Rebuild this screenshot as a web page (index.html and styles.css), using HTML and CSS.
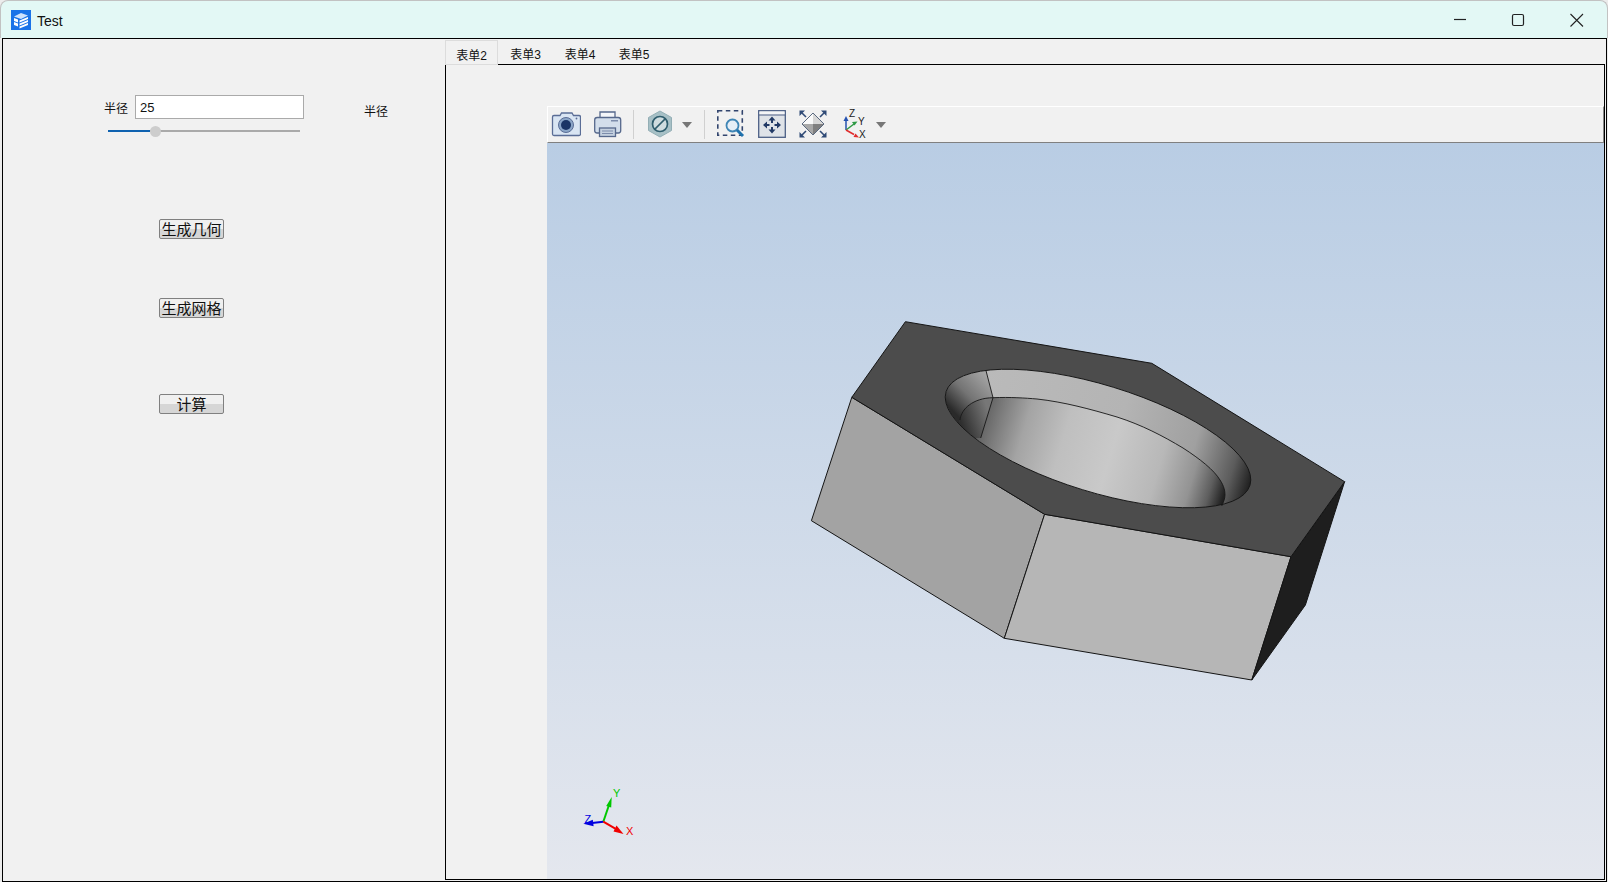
FILE: index.html
```html
<!DOCTYPE html>
<html lang="en">
<head>
    <meta charset="UTF-8">
    <meta name="viewport" content="width=device-width, initial-scale=1.0">
    <title>Test</title>
    <link rel="stylesheet" href="styles.css">
</head>
<body>
<div class="window">
    <!-- title bar -->
    <div class="titlebar">
        <svg class="app-icon" width="20" height="20" viewBox="0 0 20 20">
            <rect width="20" height="20" fill="#1a73e8"/>
            <path d="M3 6.500l7-3.500 7 2.500-7 3.500z" fill="#cfe2fb"/>
            <path d="M3 8l4 1.500v3L3 11zM3 12l4 1.500v3L3 15z" fill="#fff"/>
            <path d="M8.500 10.500l8.500-3.500v2l-8.500 3.500zM8.500 13.500l8.500-3.500v2l-8.500 3.500zM8.500 16.500l8.500-3.500v2l-8.500 3.500z" fill="#fff"/>
        </svg>
        <span class="app-title">Test</span>
        <div class="win-buttons">
            <svg width="58" height="38" viewBox="0 0 58 38"><path d="M22 18.500h12" stroke="#222" stroke-width="1.200"/></svg>
            <svg width="58" height="38" viewBox="0 0 58 38"><rect x="22.500" y="13.500" width="11" height="11" rx="1.500" fill="none" stroke="#222" stroke-width="1.200"/></svg>
            <svg width="58" height="38" viewBox="0 0 58 38"><path d="M22.500 13l12.500 12.500M35 13L22.500 25.500" stroke="#222" stroke-width="1.100"/></svg>
        </div>
    </div>

    <div class="content">
        <!-- left panel -->
        <div class="panel">
            <div class="radius-row">
                <div class="radius-input">
                    <label class="small-label">半径</label>
                    <input class="text-box" type="text" value="25">
                </div>
                <span class="small-label side-label">半径</span>
            </div>
            <div class="slider">
                <div class="slider-fill"></div>
                <div class="slider-thumb"></div>
            </div>
            <button class="action-btn btn-geo">生成几何</button>
            <button class="action-btn btn-mesh">生成网格</button>
            <button class="action-btn btn-calc">计算</button>
        </div>

        <!-- tabs + viewer -->
        <div class="main">
            <div class="tabs">
                <div class="tab active">表单2</div>
                <div class="tab">表单3</div>
                <div class="tab">表单4</div>
                <div class="tab">表单5</div>
            </div>
            <div class="tab-page">
                <div class="viewer">
                    <div class="toolbar">
                        <!-- camera -->
                        <svg width="30" height="35" viewBox="551 107 30 35">
                            <path d="M554 115.500h6l1.500-2.500h10.500l1.500 2.500h5.500a1.500 1.500 0 0 1 1.500 1.500v17a1.500 1.500 0 0 1-1.500 1.500h-25a1.500 1.500 0 0 1-1.500-1.500v-17a1.500 1.500 0 0 1 1.500-1.500z" fill="#d9e5f3" stroke="#5a6d96" stroke-width="1.300"/>
                            <circle cx="566" cy="125" r="7.500" fill="#8ba6c8" stroke="#5a6d96"/>
                            <circle cx="566" cy="125" r="5" fill="#1b3566"/>
                            <circle cx="576.500" cy="118.500" r="0.900" fill="#5a6d96"/>
                        </svg>
                        <!-- printer -->
                        <svg class="tool-print" width="28" height="35" viewBox="594 107 28 35">
                            <path d="M600 118v-6h15v6" fill="#f4f6f9" stroke="#56688c" stroke-width="1.300"/>
                            <rect x="594.700" y="117.500" width="26" height="15.500" rx="2.500" fill="#d3deeb" stroke="#56688c" stroke-width="1.300"/>
                            <rect x="611" y="120" width="7" height="1.500" fill="#7c8cab"/>
                            <rect x="599.500" y="128" width="16" height="8.500" fill="#c4d0df" stroke="#56688c" stroke-width="1.300"/>
                            <path d="M602 131h11M602 133.500h11" stroke="#7c8cab"/>
                        </svg>
                        <div class="tool-sep"></div>
                        <!-- clipping -->
                        <svg class="tool-clip" width="24" height="35" viewBox="648 107 24 35">
                            <path d="M660 111l11.500 6.500v13L660 137l-11.500-6.500v-13z" fill="#a7c0c6" stroke="#93aeb5"/>
                            <circle cx="660" cy="124" r="7.500" fill="#cfdcdf" stroke="#2f5d6d" stroke-width="1.700"/>
                            <path d="M654.500 129.500l11-11" stroke="#2f5d6d" stroke-width="1.700"/>
                        </svg>
                        <div class="drop-arrow arrow-clip"></div>
                        <div class="tool-sep sep-zoom"></div>
                        <!-- zoom window -->
                        <svg width="27" height="35" viewBox="717 107 27 35">
                            <rect x="717.800" y="110.800" width="24.500" height="24.500" fill="none" stroke="#32456e" stroke-width="1.600" stroke-dasharray="4.500 3.500"/>
                            <circle cx="732.500" cy="125.500" r="6" fill="#e6eef6" stroke="#3f85b5" stroke-width="1.800"/>
                            <path d="M737 130l6 6" stroke="#1f72ad" stroke-width="3"/>
                        </svg>
                        <!-- pan -->
                        <svg class="tool-pan" width="28" height="35" viewBox="758 107 28 35">
                            <rect x="758.700" y="110.700" width="26.600" height="26.600" fill="#dfe3e8" stroke="#4c5f85" stroke-width="1.300"/>
                            <rect x="759.500" y="111.500" width="25" height="3" fill="#f4f5f7"/>
                            <path d="M759 115h26" stroke="#4c5f85"/>
                            <path d="M772 116.500l-3.500 4h2.500v2.500h2v-2.500h2.500zM772 133.500l-3.500-4h2.500V127h2v2.500h2.500zM763 125l4-3.500v2.500h2.500v2H767v2.500zM781 125l-4-3.500v2.500h-2.500v2h2.500v2.500z" fill="#223a66"/>
                        </svg>
                        <!-- fit all -->
                        <svg class="tool-fit" width="28" height="35" viewBox="799 107 28 35">
                            <path d="M813 113l-11 11h11z" fill="#fafafa"/>
                            <path d="M813 113l11 11h-11z" fill="#d6d6d6"/>
                            <path d="M813 135l-11-11h11z" fill="#a8a8a8"/>
                            <path d="M813 135l11-11h-11z" fill="#7f7f7f"/>
                            <path d="M813 113l11 11-11 11-11-11z" fill="none" stroke="#5b6a80"/>
                            <path d="M799.500 110.500h5.500l-5.500 5.500zM826.500 110.500H821l5.500 5.500zM799.500 137.500h5.500l-5.500-5.500zM826.500 137.500H821l5.500-5.500z" fill="#2f4a76"/>
                            <path d="M802 113l4 4M824 113l-4 4M802 135l4-4M824 135l-4-4" stroke="#2f4a76" stroke-width="1.600"/>
                        </svg>
                        <!-- view axes -->
                        <svg class="tool-axes" width="30" height="35" viewBox="841 107 30 35">
                            <path d="M846 130v-10" stroke="#2452b0" stroke-width="1.500"/>
                            <path d="M846 116l-2.500 5h5z" fill="#2452b0"/>
                            <path d="M846 130l8-6" stroke="#2e9a45" stroke-width="1.500"/>
                            <path d="M857.500 121.500l-5.500 .5 2.500 3.500z" fill="#2e9a45"/>
                            <path d="M846 130l8 4.500" stroke="#e02c2c" stroke-width="1.500"/>
                            <path d="M859 137.500l-5.500-.5 2-3.500z" fill="#e02c2c"/>
                            <text class="axis-letter" x="849" y="117">Z</text>
                            <text class="axis-letter" x="858" y="125">Y</text>
                            <text class="axis-letter" x="859" y="137.500">X</text>
                        </svg>
                        <div class="drop-arrow arrow-axes"></div>
                    </div>
                    <div class="scene">
                        <svg class="nut" width="1057" height="736" viewBox="547 143 1057 736">
                            <defs>
                                <linearGradient id="wallRight" gradientUnits="userSpaceOnUse" x1="985" y1="372" x2="1261" y2="455">
                                    <stop offset="0" stop-color="#bababa"/>
                                    <stop offset="0.5" stop-color="#b4b4b4"/>
                                    <stop offset="0.77" stop-color="#a0a0a0"/>
                                    <stop offset="0.92" stop-color="#5c5c5c"/>
                                    <stop offset="1" stop-color="#1a1a1a"/>
                                </linearGradient>
                                <linearGradient id="wallLeft" gradientUnits="userSpaceOnUse" x1="987" y1="376" x2="952" y2="410">
                                    <stop offset="0" stop-color="#a4a4a4"/>
                                    <stop offset="0.55" stop-color="#747474"/>
                                    <stop offset="1" stop-color="#2a2a2a"/>
                                </linearGradient>
                                <linearGradient id="bore" gradientUnits="userSpaceOnUse" x1="985" y1="420" x2="1225" y2="492">
                                    <stop offset="0" stop-color="#666666"/>
                                    <stop offset="0.06" stop-color="#7e7e7e"/>
                                    <stop offset="0.16" stop-color="#a4a4a4"/>
                                    <stop offset="0.32" stop-color="#bfbfbf"/>
                                    <stop offset="0.52" stop-color="#c9c9c9"/>
                                    <stop offset="0.72" stop-color="#b8b8b8"/>
                                    <stop offset="0.86" stop-color="#939393"/>
                                    <stop offset="0.94" stop-color="#5e5e5e"/>
                                    <stop offset="1" stop-color="#202020"/>
                                </linearGradient>
                                <linearGradient id="boreLeft" gradientUnits="userSpaceOnUse" x1="988" y1="410" x2="960" y2="420">
                                    <stop offset="0" stop-color="#777777"/>
                                    <stop offset="1" stop-color="#2e2e2e"/>
                                </linearGradient>
                                <clipPath id="holeClip">
                                    <ellipse cx="1098" cy="438.500" rx="159" ry="53.500" transform="rotate(17.100 1098 438.500)"/>
                                </clipPath>
                            </defs>

                            <!-- nut faces -->
                            <g stroke="#141414" stroke-width="1" stroke-linejoin="round">
                                <polygon points="851.800,397.300 1044.600,514.300 1004.300,638.300 811.400,520.700" fill="#a3a3a3"/>
                                <polygon points="1044.600,514.300 1291,556.700 1251.800,680 1004.300,638.300" fill="#b6b6b6"/>
                                <polygon points="1344.600,481.700 1291,556.700 1251.800,680 1305.400,605" fill="#1e1e1e"/>
                                <polygon points="905.400,321.700 1151.800,363.300 1344.600,481.700 1291,556.700 1044.600,514.300 851.800,397.300" fill="#4c4c4c"/>
                            </g>

                            <!-- hole -->
                            <g clip-path="url(#holeClip)">
                                <rect x="930" y="360" width="340" height="160" fill="url(#wallRight)"/>
                                <path d="M986 370.700L993 397.700 980.700 438 930 440V360H986z" fill="url(#wallLeft)"/>
                                <path d="M960 420C961 409 973 398 993 397.700C1010 397 1025 398 1037 399C1064 402 1090 409 1117 417C1142 425 1163 436 1183 448C1200 459 1214 470 1220 480C1224 486 1225 491 1225 495C1225 499 1223 503 1221.700 506L1100 600 940 500z" fill="url(#bore)"/>
                                <path d="M960 420C961 409 973 398 993 397.700L980.700 438 950 440z" fill="url(#boreLeft)"/>
                            </g>
                            <g fill="none" stroke="#161616" stroke-width="0.900">
                                <ellipse cx="1098" cy="438.500" rx="159" ry="53.500" transform="rotate(17.100 1098 438.500)"/>
                                <path d="M960 420C961 409 973 398 993 397.700C1010 397 1025 398 1037 399C1064 402 1090 409 1117 417C1142 425 1163 436 1183 448C1200 459 1214 470 1220 480C1224 486 1225 491 1225 495C1225 499 1223 503 1221.700 506"/>
                                <path d="M986 370.700L993 397.700 980.700 438"/>
                            </g>

                            <!-- axis triad -->
                            <path d="M603.300 821.700L609 805" stroke="#00c800" stroke-width="2"/>
                            <path d="M611.700 797l-5.500 9 5 1.500z" fill="#00c800"/>
                            <path d="M603.300 821.700L592 823" stroke="#0000e0" stroke-width="2"/>
                            <path d="M583.300 823.700l9.500-4 .8 6.500z" fill="#0000e0"/>
                            <path d="M603.300 821.700l12 7" stroke="#f00000" stroke-width="2"/>
                            <path d="M623.500 834l-10-2.500 3-6z" fill="#f00000"/>
                            <text class="triad-letter" x="613" y="797" fill="#00c800">Y</text>
                            <text class="triad-letter" x="584.500" y="823" fill="#0000e0">Z</text>
                            <text class="triad-letter" x="626" y="835" fill="#f00000">X</text>
                        </svg>
                    </div>
                </div>
            </div>
        </div>
    </div>
</div>
</body>
</html>
```
FILE: styles.css
```css
* {
    box-sizing: border-box;
}
body {
    margin: 0;
    width: 1608px;
    height: 882px;
    overflow: hidden;
    background: #ececec;
    font-family: "Liberation Sans", "Noto Sans CJK SC", sans-serif;
}
.window {
    width: 1608px;
    height: 882px;
    display: flex;
    flex-direction: column;
}

/* title bar */
.titlebar {
    height: 38px;
    flex: none;
    display: flex;
    align-items: center;
    padding-left: 10px;
    background: #e3f8f5;
    border: 1px solid #c2c2c2;
    border-bottom: none;
    border-radius: 8px 8px 0 0;
}
.app-title {
    margin-left: 6px;
    padding-top: 2px;
    font-size: 14px;
    color: #111;
}
.win-buttons {
    margin-left: auto;
    display: flex;
    margin-right: 1px;
}

/* content */
.content {
    flex: 1;
    display: flex;
    margin: 0 1px 0 2px;
    border: 1px solid #000;
    min-height: 0;
}
.panel {
    width: 442px;
    flex: none;
    background: #f1f1f1;
}
.small-label {
    font-size: 12px;
    color: #111;
}
.radius-row {
    display: flex;
    align-items: flex-start;
    padding: 56px 0 0 101px;
}
.radius-input {
    display: flex;
    align-items: center;
    gap: 7px;
}
.text-box {
    width: 169px;
    height: 24px;
    padding: 0 4px;
    border: 1px solid #aaa;
    background: #fff;
    font: 13px "Liberation Sans", sans-serif;
    color: #111;
    outline: none;
}
.side-label {
    margin: 7px 0 0 60px;
}
.slider {
    position: relative;
    height: 2px;
    width: 192px;
    margin: 11px 0 0 105px;
    background: #aaa;
}
.slider-fill {
    width: 42px;
    height: 2px;
    background: #0f62b0;
}
.slider-thumb {
    position: absolute;
    left: 42px;
    top: -4px;
    width: 11px;
    height: 11px;
    border-radius: 50%;
    background: #cdcdcd;
}
.action-btn {
    display: block;
    width: 65px;
    height: 20px;
    padding: 0;
    margin-left: 156px;
    border: 1px solid #808080;
    border-radius: 2px;
    background: linear-gradient(#f0f0f0 50%, #d6d6d6 50%);
    font: 15px/18px "Noto Sans CJK SC", sans-serif;
    color: #111;
}
.btn-geo {
    margin-top: 87px;
}
.btn-mesh {
    margin-top: 59px;
}
.btn-calc {
    margin-top: 76px;
}

/* tabs */
.main {
    flex: 1;
    display: flex;
    flex-direction: column;
    min-width: 0;
    background: #f1f1f1;
}
.tabs {
    height: 25px;
    flex: none;
    display: flex;
    align-items: stretch;
}
.tab {
    width: 54px;
    padding-top: 6px;
    text-align: center;
    font-size: 12px;
    color: #111;
}
.tab.active {
    position: relative;
    z-index: 1;
    width: 53px;
    height: 25px;
    margin: 1px 0 -1px;
    padding-top: 5px;
    background: #f1f1f1;
    border: 1px solid #dcdcdc;
}
.tab.active + .tab {
    width: 55px;
}
.tab-page {
    flex: 1;
    display: flex;
    flex-direction: column;
    align-items: flex-end;
    min-height: 0;
    padding-top: 41px;
    margin: 0 1px 1px 0;
    border: 1px solid #000;
}
.viewer {
    width: 1057px;
    flex: 1;
    min-height: 0;
    display: flex;
    flex-direction: column;
}

/* viewer toolbar */
.toolbar {
    height: 37px;
    flex: none;
    display: flex;
    align-items: center;
    padding-left: 3px;
    background: #f1f1f1;
    border-top: 1px solid #fff;
    border-left: 1px solid #fff;
    border-right: 1px solid #888;
    border-bottom: 1px solid #808080;
}
.toolbar svg {
    flex: none;
}
.tool-print {
    margin-left: 13px;
}
.tool-sep {
    width: 1px;
    height: 29px;
    margin: 0 14px 0 11px;
    background: #d0d0d0;
}
.sep-zoom {
    margin: 0 12px 0 12px;
}
.drop-arrow {
    width: 0;
    height: 0;
    border-left: 5px solid transparent;
    border-right: 5px solid transparent;
    border-top: 6px solid #777;
}
.arrow-clip {
    margin-left: 10px;
}
.arrow-axes {
    margin-left: 5px;
}
.tool-pan {
    margin-left: 14px;
}
.tool-fit {
    margin-left: 13px;
}
.tool-axes {
    margin-left: 14px;
}
.axis-letter {
    font-size: 10px;
    fill: #222;
}

/* 3d scene */
.scene {
    flex: 1;
    min-height: 0;
    background: linear-gradient(#b9cde4, #e4e7ee);
    overflow: hidden;
}
.nut {
    display: block;
}
.triad-letter {
    font-size: 11px;
}
```
